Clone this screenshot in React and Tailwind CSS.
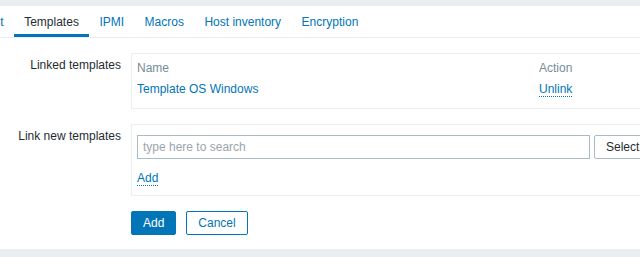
export default function App() {
  const tabs = ["Host", "Templates", "IPMI", "Macros", "Host inventory", "Encryption"];
  return (
    <div className="w-[640px] h-[257px] overflow-hidden bg-[#ebeef0] pt-[6px] text-[12px] text-[#1f2c33]" style={{ fontFamily: '"Liberation Sans", Arial, sans-serif' }}>
      <div className="bg-white h-[243px]">
        <div className="flex h-[32px] border-b border-[#ebeef0] ml-[-31px] whitespace-nowrap">
          {tabs.map((t) => (
            <div
              key={t}
              className={
                "h-[31px] pl-[10px] pr-[10.5px] pt-[9px] leading-[14px] border-b-[3px] " +
                (t === "Templates" ? "border-[#0275b8] text-[#1f2c33]" : "border-transparent text-[#0275b8]")
              }
            >
              {t}
            </div>
          ))}
        </div>

        <div className="pt-[15px] flex flex-col gap-[15px]">
          <div className="grid grid-cols-[121px_540px] gap-x-[10px]">
            <div className="pt-[5px] leading-[14px] text-right whitespace-nowrap">Linked templates</div>
            <div className="border border-[#ebeef0] px-[5px] pt-[7px] pb-[11px]">
              <div className="grid grid-cols-[402px_1fr] leading-[14px] text-[#768d99]">
                <div>Name</div>
                <div>Action</div>
              </div>
              <div className="grid grid-cols-[402px_1fr] leading-[14px] mt-[7px]">
                <div className="text-[#0275b8]">Template OS Windows</div>
                <div>
                  <span className="inline-block text-[#0275b8] border-b border-dotted border-[#0275b8] leading-[13px]">Unlink</span>
                </div>
              </div>
            </div>
          </div>

          <div className="grid grid-cols-[121px_540px] gap-x-[10px]">
            <div className="pt-[5px] leading-[14px] text-right whitespace-nowrap">Link new templates</div>
            <div className="border border-[#ebeef0] px-[5px] pt-[10px] pb-[9px]">
              <div className="flex gap-[4px]">
                <input
                  className="w-[453px] h-[24px] border border-[#acbbc2] px-[5px] text-[12px] outline-none placeholder:text-[#9ba6ac]"
                  placeholder="type here to search"
                  style={{ fontFamily: '"Liberation Sans", Arial, sans-serif' }}
                />
                <button className="h-[24px] border border-[#acbbc2] bg-white px-[11px] text-[#1f2c33] rounded-[2px]">Select</button>
              </div>
              <div className="mt-[12px] leading-[14px]">
                <span className="inline-block text-[#0275b8] border-b border-dotted border-[#0275b8]">Add</span>
              </div>
            </div>
          </div>

          <div className="ml-[131px] flex gap-[10px]">
            <button className="h-[24px] px-[11px] bg-[#0275b8] border border-[#0275b8] text-white rounded-[2px]">Add</button>
            <button className="h-[24px] px-[11px] bg-white border border-[#0275b8] text-[#0275b8] rounded-[2px]">Cancel</button>
          </div>
        </div>
      </div>
    </div>
  );
}
